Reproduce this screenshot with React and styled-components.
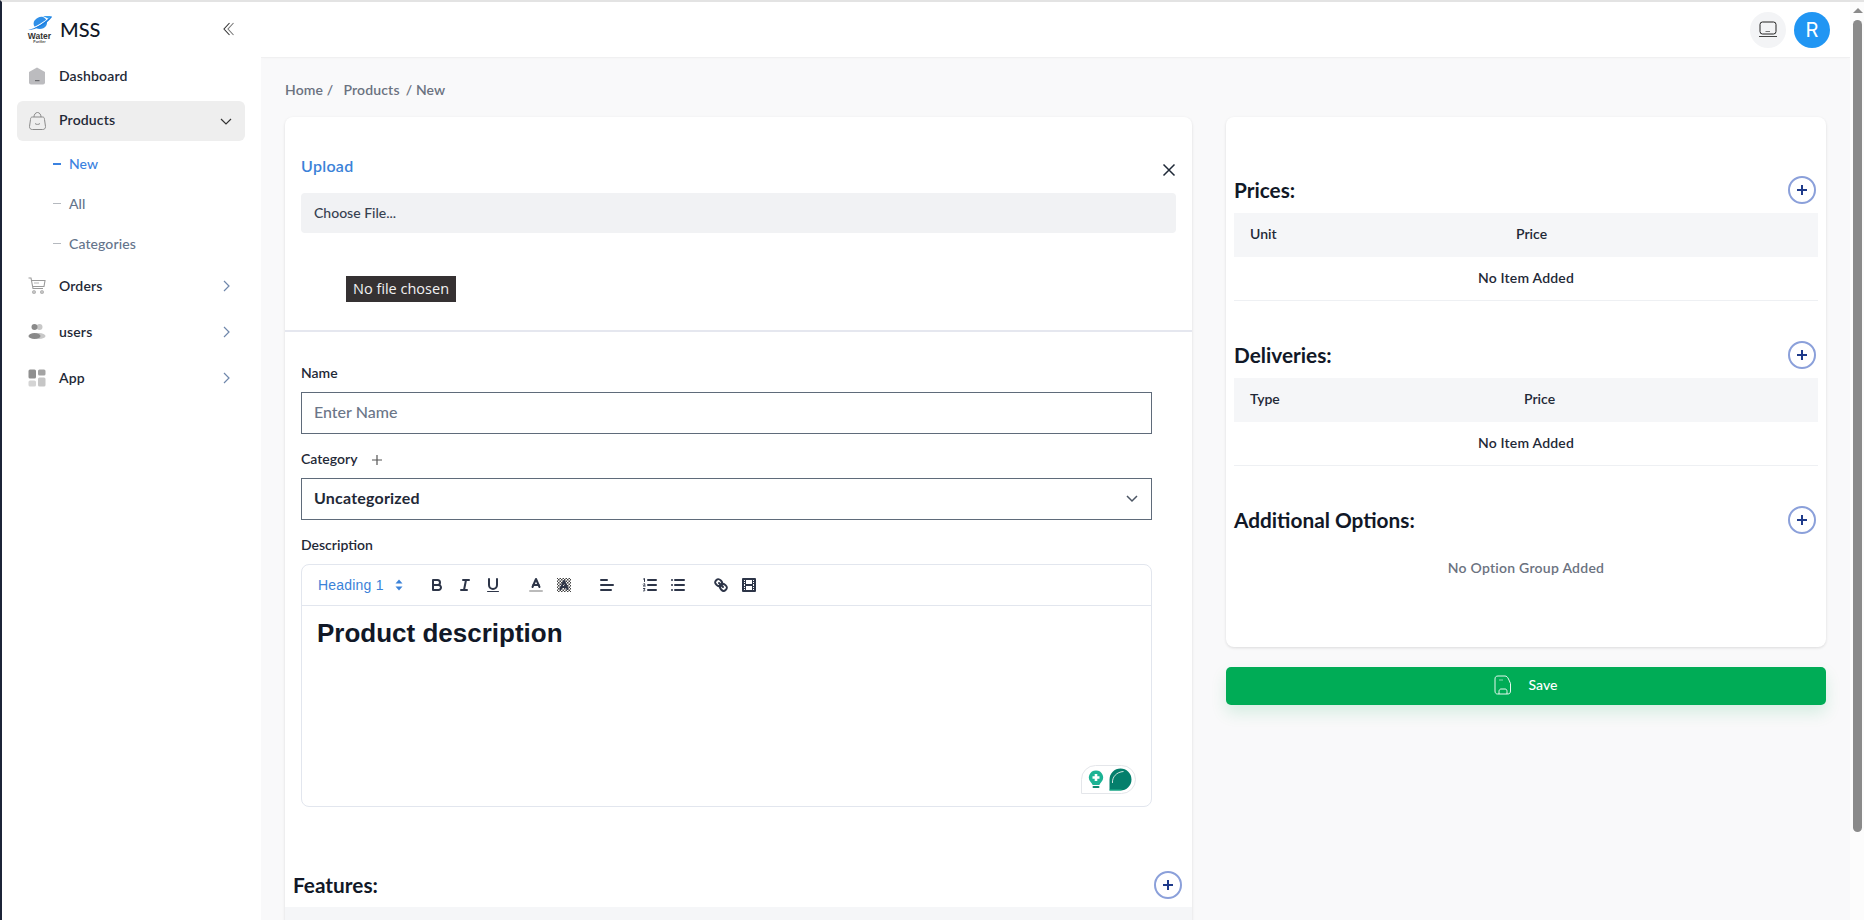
import React from "react";
import styled, { createGlobalStyle } from "styled-components";

const FONT = `"Lato", "Noto Sans", sans-serif`;

const Global = createGlobalStyle`
  html, body { margin: 0; padding: 0; height: 100%; overflow: hidden; background: #fff; }
  * { box-sizing: border-box; }
  body { font-family: ${FONT}; color: #111827; }
`;

const Frame = styled.div`
  display: flex;
  height: 100vh;
  border-top: 2px solid #e3e3e3;
  border-left: 2px solid #1c2438;
  overflow: hidden;
`;

const Sidebar = styled.aside`
  width: 259px;
  flex: none;
  background: #fff;
  padding: 0 16px 0 15px;
  position: relative;
  z-index: 2;
`;

const Brand = styled.div`
  display: flex;
  align-items: center;
  height: 54px;
  padding-left: 10px;
  padding-right: 10px;
`;

const LogoBox = styled.div`
  width: 25px;
  display: flex;
  flex-direction: column;
  align-items: center;
  line-height: 1;
`;

const LogoWord = styled.span`
  font-family: "Liberation Sans", sans-serif;
  font-weight: 700;
  font-size: 8.5px;
  line-height: 7px;
  color: #333;
`;

const LogoSub = styled.span`
  font-family: "Liberation Sans", sans-serif;
  font-weight: 700;
  font-size: 3.5px;
  line-height: 4px;
  color: #444;
`;

const BrandName = styled.span`
  font-size: 20px;
  font-weight: 500;
  margin-left: 8px;
  flex: 1;
  color: #111827;
`;

const Nav = styled.nav`
  display: flex;
  flex-direction: column;
`;

const NavRow = styled.div`
  display: flex;
  align-items: center;
  height: 40px;
  padding: 0 12px 0 11px;
  border-radius: 6px;
  margin-bottom: ${(p) => p.$gap ?? 6}px;
  background: ${(p) => (p.$active ? "#eeeeee" : "transparent")};
`;

const NavIcon = styled.span`
  width: 18px;
  height: 18px;
  display: flex;
  align-items: center;
  justify-content: center;
  flex: none;
`;

const NavText = styled.span`
  flex: 1;
  margin-left: 13px;
  margin-bottom: ${(p) => (p.$lift ? 4 : 2)}px;
  font-size: 14px;
  letter-spacing: 0.15px;
  font-weight: 600;
  color: #1f2937;
`;

const SubMenu = styled.div`
  display: flex;
  flex-direction: column;
  margin-bottom: 2px;
`;

const SubItem = styled.div`
  display: flex;
  align-items: center;
  height: 40px;
  padding-left: 36px;
  padding-bottom: 1px;
  font-size: 14px;
  letter-spacing: 0.1px;
  font-weight: 500;
  color: ${(p) => (p.$active ? "#3b82e0" : "#64748b")};
`;

const SubDash = styled.span`
  width: 8px;
  height: ${(p) => (p.$active ? 2 : 1)}px;
  background: ${(p) => (p.$active ? "#3b82e0" : "#b5b9bf")};
  margin-right: 8px;
`;

const Scroller = styled.div`
  flex: 1;
  min-width: 0;
  height: 100%;
  overflow: hidden;
  background: #f9f9fa;
`;

const Rail = styled.div`
  width: 14px;
  flex: none;
  background: #fcfcfc;
  display: flex;
  flex-direction: column;
  align-items: center;
  padding: 6px 0 0 1px;
`;

const RailArrow = styled.span`
  width: 0;
  height: 0;
  border-left: 5px solid transparent;
  border-right: 5px solid transparent;
  border-bottom: 5px solid #8a8a8a;
  margin-bottom: 7px;
`;

const RailThumb = styled.span`
  width: 9px;
  height: 812px;
  border-radius: 5px;
  background: #8a8a8a;
`;

const TopBar = styled.header`
  height: 56px;
  background: #fff;
  border-bottom: 1px solid #f0f0f1;
  box-shadow: 0 1px 3px rgba(0, 0, 0, 0.02);
  display: flex;
  align-items: center;
  justify-content: flex-end;
  gap: 8px;
  padding: 0 20px 0 0;
`;

const RoundBtn = styled.div`
  width: 36px;
  height: 36px;
  border-radius: 50%;
  background: #f3f4f6;
  display: flex;
  align-items: center;
  justify-content: center;
`;

const Avatar = styled(RoundBtn)`
  background: #2196f3;
  color: #fff;
  font-size: 20px;
  font-family: "Inter", sans-serif;
  font-weight: 400;
`;

const Content = styled.main`
  padding: 23px 24px 32px 24px;
`;

const Crumbs = styled.div`
  display: flex;
  font-size: 14px;
  letter-spacing: 0.15px;
  font-weight: 600;
  color: #6b7280;
  height: 16px;
  line-height: 18px;
  margin-bottom: 20px;
`;

const Crumb = styled.span`
  margin-right: ${(p) => p.$gap}px;
`;

const Columns = styled.div`
  display: grid;
  grid-template-columns: 907px 600px;
  gap: 34px;
  align-items: start;
`;

const Card = styled.section`
  background: #fff;
  border-radius: 8px;
  box-shadow: 0 1px 3px rgba(0, 0, 0, 0.12);
`;

const UploadBlock = styled.div`
  padding: 38px 16px 0;
  height: 215px;
  border-bottom: 2px solid #e5e7ef;
`;

const UploadHead = styled.div`
  display: flex;
  align-items: center;
  justify-content: space-between;
  height: 20px;
  margin-bottom: 18px;
`;

const UploadTitle = styled.span`
  font-size: 16px;
  letter-spacing: 0.3px;
  font-weight: 600;
  color: #3b82d8;
`;

const CloseX = styled.span`
  display: flex;
  margin-top: 10px;
`;

const FileBar = styled.div`
  height: 40px;
  background: #f1f2f4;
  border-radius: 4px;
  font-size: 14px;
  font-weight: 500;
  color: #374151;
  display: flex;
  align-items: center;
  padding: 0 0 2px 13px;
`;

const NoFile = styled.div`
  display: inline-block;
  margin: 43px 0 0 45px;
  background: #353132;
  color: #f2f2f2;
  font-family: "Open Sans", sans-serif;
  font-size: 14.5px;
  height: 26px;
  line-height: 25px;
  padding: 0 7px;
`;

const Form = styled.div`
  padding: 31px 40px 0 16px;
`;

const Field = styled.div`
  margin-bottom: 15px;
`;

const Label = styled.div`
  display: flex;
  align-items: center;
  height: 20px;
  margin-bottom: 9px;
  padding-bottom: 1px;
  font-size: 14px;
  font-weight: 600;
  color: #1f2937;
`;

const AddMark = styled.span`
  display: flex;
  margin-left: 14px;
  margin-top: 2px;
`;

const Control = styled.div`
  height: 42px;
  border: 1px solid #5f6b7a;
  display: flex;
  align-items: center;
  justify-content: space-between;
  padding: 0 12px 3px;
  font-size: 16px;
  letter-spacing: ${(p) => (p.$strong ? 0.2 : 0)}px;
  font-weight: ${(p) => (p.$strong ? 700 : 500)};
  color: ${(p) => (p.$strong ? "#1f2937" : "#6b7688")};
`;

const Editor = styled.div`
  height: 243px;
  border: 1px solid #e2e6ee;
  border-radius: 8px;
  position: relative;
  font-family: "Liberation Sans", sans-serif;
`;

const Toolbar = styled.div`
  display: flex;
  align-items: center;
  height: 41px;
  padding: 8px;
  border-bottom: 1px solid #e2e6ee;
`;

const Picker = styled.div`
  width: 98px;
  height: 24px;
  display: flex;
  align-items: center;
  justify-content: space-between;
  padding: 0 5px 0 8px;
  font-size: 14px;
  letter-spacing: 0.2px;
  color: #3b82d8;
  margin-right: 15px;
`;

const QlGroup = styled.div`
  display: flex;
  margin-right: 15px;
`;

const QlBtn = styled.span`
  width: 28px;
  height: 24px;
  display: flex;
  align-items: center;
  justify-content: center;
  svg { width: 18px; height: 18px; fill: none; stroke: #2d3548; stroke-width: 2; stroke-linecap: round; stroke-linejoin: round; }
  svg .f { fill: #2d3548; stroke: none; }
  svg .w { stroke-width: 1; }
  svg .n { stroke: none; }
  svg .l { stroke: #bbb; }
`;

const EditorBody = styled.div`
  padding: 9px 15px;
  h1 {
    margin: 0;
    font-size: 26px;
    line-height: 36px;
    font-weight: 700;
    color: #111827;
  }
`;

const Widget = styled.div`
  position: absolute;
  right: 15px;
  bottom: 12px;
  width: 55px;
  height: 29px;
  border: 1px solid #e4e6ea;
  border-radius: 15px 15px 15px 0;
  display: flex;
  align-items: center;
  justify-content: space-between;
  padding: 0 3px 0 6px;
`;

const SectionHead = styled.div`
  display: flex;
  align-items: center;
  justify-content: space-between;
  height: 28px;
  padding-right: 2px;
  margin-bottom: ${(p) => p.$mb ?? 9}px;
`;

const SectionTitle = styled.h3`
  margin: 0 0 2px;
  font-size: 20.8px;
  font-weight: 700;
  color: #111827;
`;

const PlusBtn = styled.span`
  width: 28px;
  height: 28px;
  border-radius: 50%;
  border: 2px solid #8ba0da;
  display: flex;
  align-items: center;
  justify-content: center;
  flex: none;
`;

const Features = styled.div`
  margin-top: 64px;
  padding-bottom: 40px;
`;

const FeaturesHead = styled(SectionHead)`
  padding: 0 10px 0 8px;
  margin-bottom: 8px;
`;

const TableHead = styled.div`
  display: grid;
  grid-template-columns: ${(p) => p.$cols};
  align-items: center;
  height: 44px;
  background: #f5f6f8;
  font-size: 14px;
  font-weight: 600;
  color: #1f2937;
  padding: 0 0 3px 16px;
`;

const EmptyRow = styled.div`
  height: 44px;
  border-bottom: 1px solid #eef0f3;
  display: flex;
  align-items: center;
  justify-content: center;
  font-size: 14px;
  letter-spacing: 0.2px;
  font-weight: 600;
  color: #1f2937;
  padding-bottom: 2px;
  margin-bottom: 40px;
`;

const RightCard = styled(Card)`
  padding: 59px 8px 0;
  height: 530px;
`;

const NoOptions = styled.div`
  text-align: center;
  font-size: 14px;
  letter-spacing: 0.25px;
  font-weight: 600;
  color: #6b7280;
  margin-top: 25px;
`;

const SaveBtn = styled.button`
  width: 100%;
  height: 38px;
  margin-top: 20px;
  border: 0;
  border-radius: 5px;
  background: #00ac56;
  box-shadow: 0 8px 16px rgba(0, 172, 86, 0.14);
  color: #fff;
  font-family: ${FONT};
  font-size: 14px;
  letter-spacing: 0.1px;
  font-weight: 500;
  display: flex;
  align-items: center;
  justify-content: center;
  gap: 16px;
  padding: 0 0 3px;
`;

/* ---- drawings ---- */
const Logo = () => (
  <svg width="26" height="18" viewBox="0 0 26 18">
    <path d="M16 2c4 2 5 6 3 9-2 3-7 4-10 2-3-2-3-6-1-8 2-2 5-4 8-3z" fill="#2f8fe8" />
    <path d="M2 14C8 13 18 7 24 2" fill="none" stroke="#fff" strokeWidth="1.4" />
    <path d="M1 15C8 14 19 7 24 1l1 1C20 9 9 15 1 15z" fill="#1c7fe0" />
    <path d="M16 1h8l-2 3z" fill="#3aa0f0" />
  </svg>
);

const Chevron = ({ dir = "right", color = "#6f87ab" }) => (
  <svg width="14" height="14" viewBox="0 0 14 14" fill="none" stroke={color} strokeWidth="1.2">
    {dir === "right" ? <path d="M5 2l5 5-5 5" /> : <path d="M2 5l5 5 5-5" />}
  </svg>
);

const Collapse = () => (
  <svg width="12" height="14" viewBox="0 0 12 14" fill="none" stroke="#333" strokeWidth="1.1">
    <path d="M6.500 1L1 7l5.500 6" />
    <path d="M10.500 1L5 7l5.500 6" stroke="#777" />
  </svg>
);

const HomeIcon = () => (
  <svg width="18" height="18" viewBox="0 0 18 18">
    <path d="M9 0.500L17 5v10.500a2 2 0 0 1-2 2H3a2 2 0 0 1-2-2V5z" fill="#bcbcbf" />
    <rect x="7" y="13" width="4.500" height="1.200" fill="#6b6b6f" />
  </svg>
);

const BagIcon = () => (
  <svg width="17" height="18" viewBox="0 0 17 18" fill="none" stroke="#8a8a8a" strokeWidth="1">
    <path d="M3.500 5h10c1.500 0 2 1 2 2.500l1 7c0 2-1 3-3 3h-10c-2 0-3-1-3-3l1-7c0-1.500.500-2.500 2-2.500z" />
    <path d="M5 5c0-2.500 1.500-4.500 3.500-4.500S12 2.500 12 5" />
    <path d="M6 11.500c1 1.200 4 1.200 5 0" />
  </svg>
);

const CartIcon = () => (
  <svg width="18" height="18" viewBox="0 0 18 18" fill="none" stroke="#9a9a9a" strokeWidth="1.100">
    <path d="M0.500 1h2.500l2 10.500h10" />
    <path d="M3.500 3.500H17l-1 6H5" />
    <path d="M6 6h5" stroke="#bbb" />
    <circle cx="6" cy="15" r="1.300" />
    <circle cx="14" cy="15" r="1.300" />
  </svg>
);

const UsersIcon = () => (
  <svg width="18" height="18" viewBox="0 0 18 18">
    <circle cx="11.500" cy="4" r="3" fill="#c8c8c8" />
    <circle cx="6.500" cy="4" r="3" fill="#8a8a8a" />
    <ellipse cx="11" cy="13" rx="6.500" ry="3" fill="#c8c8c8" />
    <ellipse cx="6.500" cy="13" rx="6" ry="3" fill="#8a8a8a" />
  </svg>
);

const AppIcon = () => (
  <svg width="18" height="18" viewBox="0 0 18 18">
    <rect x="0.500" y="0.500" width="7.500" height="9" rx="1.500" fill="#8f8f8f" />
    <rect x="10" y="0.500" width="7.500" height="6" rx="1.500" fill="#a3a3a3" />
    <rect x="0.500" y="11.500" width="7.500" height="6" rx="1.500" fill="#d4d4d4" />
    <rect x="10" y="8.500" width="7.500" height="9" rx="1.500" fill="#c6c6c6" />
  </svg>
);

const DeviceIcon = () => (
  <svg width="20" height="18" viewBox="0 0 20 18" fill="none">
    <rect x="2" y="1" width="16" height="12" rx="2.500" stroke="#222" strokeWidth="1" />
    <path d="M7.500 10.500h4.500" stroke="#777" strokeWidth="1" />
    <path d="M1 15.500h18" stroke="#444" strokeWidth="1" />
  </svg>
);

const SaveIcon = () => (
  <svg width="18" height="20" viewBox="0 0 18 20" fill="none" stroke="#fff" strokeWidth="0.900">
    <path d="M4 1h7c1.500 0 2.500 1 3.500 3l2 4.500V16c0 2-1 3-3 3h-10c-1.500 0-2.500-1-2.500-3V4c0-2 1-3 3-3z" />
    <path d="M5 5h4" opacity="0.600" />
    <path d="M5 19v-2.500c0-1.500 1-2.500 2-2.500h4c1.500 0 2 1 2 2.500V19" />
  </svg>
);

const Plus = ({ size = 12, color = "#1e3a8a", w = 2 }) => (
  <svg width={size} height={size} viewBox="0 0 12 12" stroke={color} strokeWidth={w}>
    <path d="M6 1v10M1 6h10" />
  </svg>
);

const Close = () => (
  <svg width="14" height="14" viewBox="0 0 14 14" stroke="#1f2937" strokeWidth="1.500">
    <path d="M1.500 1.500l11 11M12.500 1.500l-11 11" />
  </svg>
);

const Caret = () => (
  <svg width="8" height="12" viewBox="0 0 8 12" fill="#3b82d8">
    <path d="M4 0.500L7.500 4.500H0.500zM4 11.500L0.500 7.500h7z" />
  </svg>
);

const Selector = () => (
  <svg width="14" height="14" viewBox="0 0 14 14" fill="none" stroke="#4b5563" strokeWidth="1.500">
    <path d="M2 5l5 5 5-5" />
  </svg>
);

const qlIcons = {
  bold: (
    <svg viewBox="0 0 18 18">
      <path d="M5,4H9.500A2.500,2.500,0,0,1,12,6.500v0A2.500,2.500,0,0,1,9.500,9H5A0,0,0,0,1,5,9V4A0,0,0,0,1,5,4Z" />
      <path d="M5,9h5.500A2.500,2.500,0,0,1,13,11.500v0A2.500,2.500,0,0,1,10.500,14H5a0,0,0,0,1,0,0V9A0,0,0,0,1,5,9Z" />
    </svg>
  ),
  italic: (
    <svg viewBox="0 0 18 18">
      <line x1="7" x2="13" y1="4" y2="4" />
      <line x1="5" x2="11" y1="14" y2="14" />
      <line x1="8" x2="10" y1="14" y2="4" />
    </svg>
  ),
  underline: (
    <svg viewBox="0 0 18 18">
      <path d="M5,3V9a4.012,4.012,0,0,0,4,4H9a4.012,4.012,0,0,0,4-4V3" />
      <rect className="f" height="1" rx="0.500" width="12" x="3" y="15" />
    </svg>
  ),
  color: (
    <svg viewBox="0 0 18 18">
      <line className="l" x1="3" x2="15" y1="15" y2="15" />
      <polyline points="5.500 11 9 3 12.500 11" />
      <line x1="11.630" x2="6.380" y1="9" y2="9" />
    </svg>
  ),
  background: (
    <svg viewBox="0 0 18 18">
      <defs>
        <pattern id="hatch" width="3" height="3" patternUnits="userSpaceOnUse">
          <rect className="n" width="1.500" height="1.500" fill="#444" />
          <rect className="n" x="1.500" y="1.500" width="1.500" height="1.500" fill="#444" />
        </pattern>
      </defs>
      <rect className="n" x="2" y="2" width="14" height="14" fill="url(#hatch)" />
      <polyline points="5.500 13 9 5 12.500 13" />
      <line x1="11.630" x2="6.380" y1="11" y2="11" />
    </svg>
  ),
  align: (
    <svg viewBox="0 0 18 18">
      <line x1="3" x2="15" y1="9" y2="9" />
      <line x1="3" x2="13" y1="14" y2="14" />
      <line x1="3" x2="9" y1="4" y2="4" />
    </svg>
  ),
  ordered: (
    <svg viewBox="0 0 18 18">
      <line x1="7" x2="15" y1="4" y2="4" />
      <line x1="7" x2="15" y1="9" y2="9" />
      <line x1="7" x2="15" y1="14" y2="14" />
      <path className="w" d="M2.500 3l1-.5v3M2.300 8c.5-.8 2-.5 1.700.5l-1.700 1.500h2M2.500 12.500h1.500l-.8 1c1 0 1 2-.7 1.500" />
    </svg>
  ),
  bullet: (
    <svg viewBox="0 0 18 18">
      <line x1="6" x2="15" y1="4" y2="4" />
      <line x1="6" x2="15" y1="9" y2="9" />
      <line x1="6" x2="15" y1="14" y2="14" />
      <line x1="3" x2="3" y1="4" y2="4" />
      <line x1="3" x2="3" y1="9" y2="9" />
      <line x1="3" x2="3" y1="14" y2="14" />
    </svg>
  ),
  link: (
    <svg viewBox="0 0 18 18">
      <line x1="7" x2="11" y1="7" y2="11" />
      <path d="M8.900,4.577a3.476,3.476,0,0,1,.36,4.679A3.476,3.476,0,0,1,4.577,8.900C3.185,7.500,2.035,6.400,4.217,4.217S7.500,3.185,8.900,4.577Z" />
      <path d="M13.423,9.100a3.476,3.476,0,0,0-4.679-.36,3.476,3.476,0,0,0,.36,4.679c1.392,1.392,2.500,2.542,4.679.36S14.815,10.500,13.423,9.100Z" />
    </svg>
  ),
  video: (
    <svg viewBox="0 0 18 18">
      <rect height="12" width="12" x="3" y="3" />
      <rect className="f" height="12" width="1" x="5" y="3" />
      <rect className="f" height="12" width="1" x="12" y="3" />
      <rect className="f" height="2" width="8" x="5" y="8" />
      <rect className="f" height="1" width="3" x="3" y="5" />
      <rect className="f" height="1" width="3" x="3" y="7" />
      <rect className="f" height="1" width="3" x="3" y="10" />
      <rect className="f" height="1" width="3" x="3" y="12" />
      <rect className="f" height="1" width="3" x="12" y="5" />
      <rect className="f" height="1" width="3" x="12" y="7" />
      <rect className="f" height="1" width="3" x="12" y="10" />
      <rect className="f" height="1" width="3" x="12" y="12" />
    </svg>
  ),
};

const groups = [
  ["bold", "italic", "underline"],
  ["color", "background"],
  ["align"],
  ["ordered", "bullet"],
  ["link", "video"],
];

const WidgetIcons = () => (
  <>
    <svg width="16" height="20" viewBox="0 0 16 20">
      <path d="M8 0.500a7 7 0 0 1 5 12c-1 1-1.500 2-1.500 2.500h-7c0-.5-.5-1.500-1.500-2.500a7 7 0 0 1 5-12z" fill="#1cb394" />
      <path d="M8 4v7M4.500 7.500h7" stroke="#fff" strokeWidth="2.600" />
      <rect x="4.500" y="16" width="7" height="2" rx="1" fill="#0f8a72" />
    </svg>
    <svg width="23" height="23" viewBox="0 0 23 23">
      <path d="M11.500 0.500a11 11 0 0 1 0 22H0.500v-11a11 11 0 0 1 11-11z" fill="#047f6c" />
      <path d="M0.500 21.500h12v1H0.500z" fill="#20b990" />
      <path d="M3.500 15c-.5-6 4-11 11-11.500" fill="none" stroke="#cfe6e0" strokeWidth="1" />
    </svg>
  </>
);

export default function App() {
  return (
    <>
      <Global />
      <Frame>
        <Sidebar>
          <Brand>
            <LogoBox>
              <Logo />
              <LogoWord>Water</LogoWord>
              <LogoSub>Purifier</LogoSub>
            </LogoBox>
            <BrandName>MSS</BrandName>
            <Collapse />
          </Brand>
          <Nav>
            <NavRow $gap={5}>
              <NavIcon><HomeIcon /></NavIcon>
              <NavText>Dashboard</NavText>
            </NavRow>
            <NavRow $active $gap={3}>
              <NavIcon><BagIcon /></NavIcon>
              <NavText $lift>Products</NavText>
              <Chevron dir="down" color="#333" />
            </NavRow>
            <SubMenu>
              <SubItem $active><SubDash $active />New</SubItem>
              <SubItem><SubDash />All</SubItem>
              <SubItem><SubDash />Categories</SubItem>
            </SubMenu>
            <NavRow>
              <NavIcon><CartIcon /></NavIcon>
              <NavText>Orders</NavText>
              <Chevron />
            </NavRow>
            <NavRow>
              <NavIcon><UsersIcon /></NavIcon>
              <NavText>users</NavText>
              <Chevron />
            </NavRow>
            <NavRow>
              <NavIcon><AppIcon /></NavIcon>
              <NavText>App</NavText>
              <Chevron />
            </NavRow>
          </Nav>
        </Sidebar>
        <Scroller>
          <TopBar>
            <RoundBtn><DeviceIcon /></RoundBtn>
            <Avatar>R</Avatar>
          </TopBar>
          <Content>
            <Crumbs>
              <Crumb $gap={10}>Home /</Crumb>
              <Crumb $gap={6}>Products</Crumb>
              <Crumb $gap={0}>/ New</Crumb>
            </Crumbs>
            <Columns>
              <Card>
                <UploadBlock>
                  <UploadHead>
                    <UploadTitle>Upload</UploadTitle>
                    <CloseX><Close /></CloseX>
                  </UploadHead>
                  <FileBar>Choose File...</FileBar>
                  <NoFile>No file chosen</NoFile>
                </UploadBlock>
                <Form>
                  <Field>
                    <Label>Name</Label>
                    <Control>Enter Name</Control>
                  </Field>
                  <Field>
                    <Label>
                      Category
                      <AddMark><Plus size={12} color="#555" w={1.2} /></AddMark>
                    </Label>
                    <Control $strong>
                      Uncategorized
                      <Selector />
                    </Control>
                  </Field>
                  <Label>Description</Label>
                  <Editor>
                    <Toolbar>
                      <Picker>Heading 1<Caret /></Picker>
                      {groups.map((g) => (
                        <QlGroup key={g[0]}>
                          {g.map((n) => (
                            <QlBtn key={n}>{qlIcons[n]}</QlBtn>
                          ))}
                        </QlGroup>
                      ))}
                    </Toolbar>
                    <EditorBody>
                      <h1>Product description</h1>
                    </EditorBody>
                    <Widget><WidgetIcons /></Widget>
                  </Editor>
                </Form>
                <Features>
                  <FeaturesHead>
                    <SectionTitle>Features:</SectionTitle>
                    <PlusBtn><Plus /></PlusBtn>
                  </FeaturesHead>
                  <TableHead $cols="1fr" />
                </Features>
              </Card>
              <div>
                <RightCard>
                  <SectionHead>
                    <SectionTitle>Prices:</SectionTitle>
                    <PlusBtn><Plus /></PlusBtn>
                  </SectionHead>
                  <TableHead $cols="266px 1fr">
                    <span>Unit</span>
                    <span>Price</span>
                  </TableHead>
                  <EmptyRow>No Item Added</EmptyRow>
                  <SectionHead>
                    <SectionTitle>Deliveries:</SectionTitle>
                    <PlusBtn><Plus /></PlusBtn>
                  </SectionHead>
                  <TableHead $cols="274px 1fr">
                    <span>Type</span>
                    <span>Price</span>
                  </TableHead>
                  <EmptyRow>No Item Added</EmptyRow>
                  <SectionHead $mb={0}>
                    <SectionTitle>Additional Options:</SectionTitle>
                    <PlusBtn><Plus /></PlusBtn>
                  </SectionHead>
                  <NoOptions>No Option Group Added</NoOptions>
                </RightCard>
                <SaveBtn type="button"><SaveIcon />Save</SaveBtn>
              </div>
            </Columns>
          </Content>
        </Scroller>
        <Rail>
          <RailArrow />
          <RailThumb />
        </Rail>
      </Frame>
    </>
  );
}
